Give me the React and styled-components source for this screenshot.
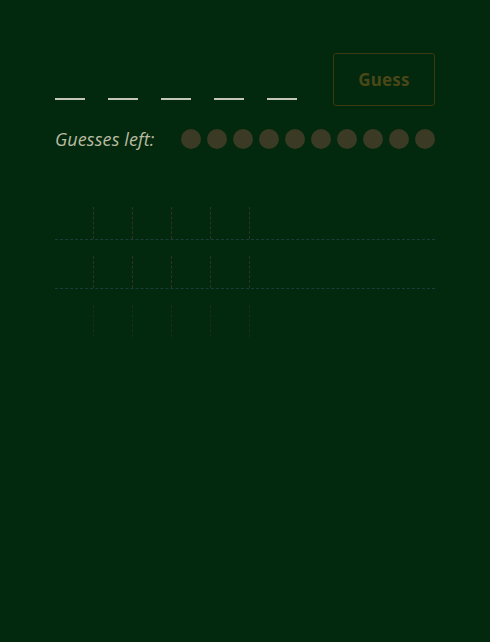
import React from "react";
import styled, { createGlobalStyle } from "styled-components";

const Global = createGlobalStyle`
  html, body { margin: 0; padding: 0; background: #02280d; }
  body { min-height: 642px; }
`;

const Page = styled.div`
  width: 380px;
  padding: 53px 55px 0 55px;
  display: flex;
  flex-direction: column;
`;

const TopBar = styled.div`
  display: flex;
  justify-content: space-between;
  align-items: flex-end;
  height: 53px;
`;

const Slots = styled.div`
  display: flex;
  gap: 23px;
  padding-bottom: 6px;
`;

const Slot = styled.div`
  width: 30px;
  height: 2px;
  background: #c4c7b6;
`;

const GuessButton = styled.button`
  box-sizing: border-box;
  width: 102px;
  height: 53px;
  border: 1px solid #3d3a12;
  border-radius: 3px;
  background: transparent;
  color: #4a4718;
  font-family: "Noto Sans", sans-serif;
  font-weight: 700;
  font-size: 17px;
  letter-spacing: 0.2px;
  padding: 0;
`;

const LivesRow = styled.div`
  display: flex;
  align-items: center;
  justify-content: space-between;
  margin-top: 22px;
  height: 22px;
`;

const LivesLabel = styled.span`
  font-family: "Open Sans", sans-serif;
  font-style: italic;
  font-size: 18px;
  letter-spacing: 0.1px;
  color: #b9baa0;
`;

const Dots = styled.div`
  display: flex;
  gap: 6px;
`;

const Dot = styled.div`
  width: 20px;
  height: 20px;
  border-radius: 50%;
  background: #3b3a24;
`;

const Board = styled.div`
  margin-top: 41px;
  display: flex;
  flex-direction: column;
`;

const Row = styled.div`
  display: grid;
  grid-template-columns: repeat(5, 39px) 1fr;
  padding-top: 16px;
  border-bottom: 1px dashed ${(p) => (p.$last ? "transparent" : "#1d3c3a")};
`;

const Cell = styled.div`
  height: 32px;
  border-right: 1px dashed ${(p) => (p.$open ? "transparent" : p.$dim ? "#1d2a1e" : "#2f3326")};
`;

export default function App() {
  const rows = [0, 1, 2];
  return (
    <>
      <Global />
      <Page>
        <TopBar>
          <Slots>
            {[0, 1, 2, 3, 4].map((i) => (
              <Slot key={i} />
            ))}
          </Slots>
          <GuessButton>Guess</GuessButton>
        </TopBar>
        <LivesRow>
          <LivesLabel>Guesses left:</LivesLabel>
          <Dots>
            {Array.from({ length: 10 }).map((_, i) => (
              <Dot key={i} />
            ))}
          </Dots>
        </LivesRow>
        <Board>
          {rows.map((r) => (
            <Row key={r} $last={r === 2}>
              {[0, 1, 2, 3, 4].map((c) => (
                <Cell key={c} $dim={r === 2} />
              ))}
              <Cell $open />
            </Row>
          ))}
        </Board>
      </Page>
    </>
  );
}
